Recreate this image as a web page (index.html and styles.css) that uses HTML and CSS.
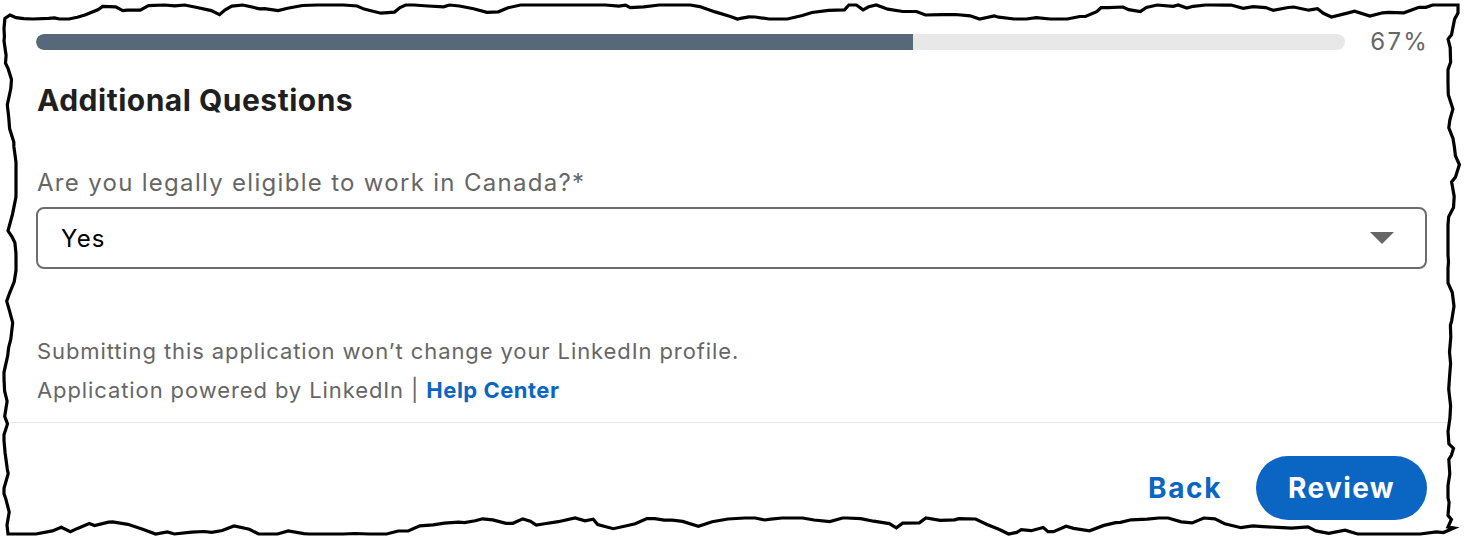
FILE: index.html
```html
<!DOCTYPE html>
<html lang="en">
<head>
<meta charset="utf-8">
<title>Additional Questions</title>
<link rel="stylesheet" href="styles.css">
</head>
<body>
<div class="sheet">
  <div class="content">
    <div class="progress-row">
      <div class="track"><div class="fill" style="width:67%"></div></div>
      <span class="pct">67%</span>
    </div>
    <h3 class="title">Additional Questions</h3>
    <label class="q-label">Are you legally eligible to work in Canada?*</label>
    <div class="select">
      <span class="select-value">Yes</span>
      <svg class="caret" width="24" height="12" viewBox="0 0 24 12"><path d="M0 0 H24 L12 12 Z" fill="#666"/></svg>
    </div>
    <p class="note first">Submitting this application won’t change your LinkedIn profile.</p>
    <p class="note">Application powered by LinkedIn | <a class="help" href="#">Help Center</a></p>
  </div>
  <div class="divider"></div>
  <div class="actions">
    <a class="back" href="#">Back</a>
    <button class="review" type="button">Review</button>
  </div>
  <svg class="torn" width="1466" height="538" viewBox="0 0 1466 538"><path id="edge" d="" fill="none" stroke="#000" stroke-width="3.2" stroke-linejoin="miter"/></svg>
</div>
<script src="script.js"></script>
</body>
</html>
```

FILE: styles.css
```css
* { box-sizing: border-box; }
html, body { margin: 0; padding: 0; background: #fff; }
body {
  font-family: Inter, "Noto Sans", "Liberation Sans", sans-serif;
  color: #1f1f1f;
}
.sheet {
  position: relative;
  width: 1466px;
  height: 538px;
  overflow: hidden;
}
.content {
  padding: 30px 39px 0 36px;
}
.progress-row {
  display: flex;
  align-items: center;
  gap: 25px;
  height: 24px;
}
.track {
  flex: 1;
  height: 16px;
  border-radius: 8px;
  background: #e8e8e8;
  overflow: hidden;
}
.fill {
  height: 100%;
  background: #56687a;
  border-radius: 8px 0 0 8px;
}
.pct {
  font-size: 24px;
  letter-spacing: 2.2px;
  margin-right: -2px;
  color: #666;
  line-height: 24px;
}
.title {
  margin: 28px 0 0 1px;
  font-size: 30px;
  font-weight: 700;
  letter-spacing: 0.5px;
  line-height: 36px;
  color: #1f1f1f;
}
.q-label {
  display: block;
  margin: 50px 0 0 1px;
  font-size: 24px;
  letter-spacing: 1.3px;
  line-height: 30px;
  color: #666;
}
.select {
  margin-top: 9px;
  height: 62px;
  border: 2px solid #6d6d6d;
  border-radius: 8px;
  display: flex;
  align-items: center;
  justify-content: space-between;
  padding: 0 31px 0 23px;
}
.select-value {
  font-size: 24px;
  letter-spacing: 1.2px;
  color: #000;
}
.caret { display: block; }
.note {
  margin: 0 0 0 1px;
  font-size: 22px;
  letter-spacing: 0.9px;
  line-height: 39px;
  color: #666;
}
.note.first { margin-top: 63px; }
.help {
  color: #0a66c2;
  font-weight: 700;
  letter-spacing: 0.5px;
  text-decoration: none;
}
.divider {
  margin: 12px 16px 0 10px;
  height: 1px;
  background: #e6e6e6;
}
.actions {
  display: flex;
  justify-content: flex-end;
  align-items: center;
  gap: 34px;
  padding: 33px 39px 0 0;
}
.back {
  color: #0a66c2;
  font-size: 28px;
  font-weight: 700;
  letter-spacing: 1.6px;
  text-decoration: none;
}
.review {
  height: 64px;
  width: 171px;
  padding: 0;
  border: none;
  border-radius: 32px;
  background: #0a66c2;
  color: #fff;
  font-family: inherit;
  font-size: 28px;
  font-weight: 700;
  letter-spacing: 1.4px;
}
.torn {
  position: absolute;
  left: 0;
  top: 0;
  pointer-events: none;
}
```

FILE: script.js
```js
(function () {
  var s = 987654;
  function r() { s = (s * 1103515245 + 12345) % 2147483648; return s / 2147483648; }
  function clamp(v, a, b) { return Math.max(a, Math.min(b, v)); }
  var pts = [];
  var x = 10, y = 15;
  pts.push([x, y]);
  while (x < 1450) {
    x += 4 + r() * 13;
    y = clamp(y + (r() - 0.5) * 11, 5, 19);
    pts.push([Math.min(x, 1458), y]);
  }
  x = 1458; y = 13; pts.push([x, y]);
  while (y < 520) {
    y += 4 + r() * 13;
    x = clamp(x + (r() - 0.5) * 10, 1448, 1462);
    pts.push([x, Math.min(y, 527)]);
  }
  x = 1454; y = 528; pts.push([x, y]);
  while (x > 16) {
    x -= 4 + r() * 13;
    y = clamp(y + (r() - 0.5) * 11, 518, 534);
    pts.push([Math.max(x, 8), y]);
  }
  x = 7; y = 525; pts.push([x, y]);
  while (y > 22) {
    y -= 4 + r() * 13;
    x = clamp(x + (r() - 0.5) * 10, 4, 16);
    pts.push([x, Math.max(y, 15)]);
  }
  var d = 'M' + pts.map(function (p) { return p[0].toFixed(1) + ' ' + p[1].toFixed(1); }).join(' L') + ' Z';
  document.getElementById('edge').setAttribute('d', d);
})();
```
